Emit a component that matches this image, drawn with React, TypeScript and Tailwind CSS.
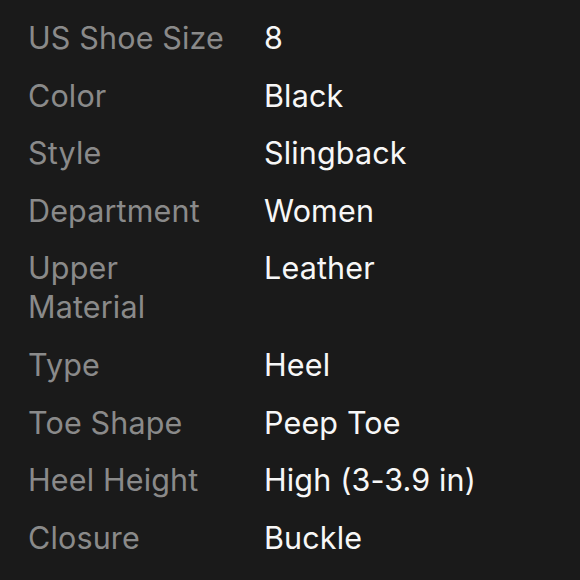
const rows: [string, string][] = [
  ['US Shoe Size', '8'],
  ['Color', 'Black'],
  ['Style', 'Slingback'],
  ['Department', 'Women'],
  ['Upper Material', 'Leather'],
  ['Type', 'Heel'],
  ['Toe Shape', 'Peep Toe'],
  ['Heel Height', 'High (3-3.9 in)'],
  ['Closure', 'Buckle'],
];

export default function App() {
  return (
    <div
      className="w-[580px] h-[580px] bg-[#1a1a1a] overflow-hidden pl-[28px] pt-[18px]"
      style={{ fontFamily: 'Inter, "Noto Sans", sans-serif' }}
    >
      <div className="flex flex-col gap-[18.6px]">
        {rows.map(([label, value]) => (
          <div key={label} className="flex text-[30.5px] leading-[39px] tracking-[0.005em]">
            <div className="w-[236px] pr-[36px] text-[#8a8a8a]">{label}</div>
            <div className="text-[#f7f7f7]">{value}</div>
          </div>
        ))}
      </div>
    </div>
  );
}
